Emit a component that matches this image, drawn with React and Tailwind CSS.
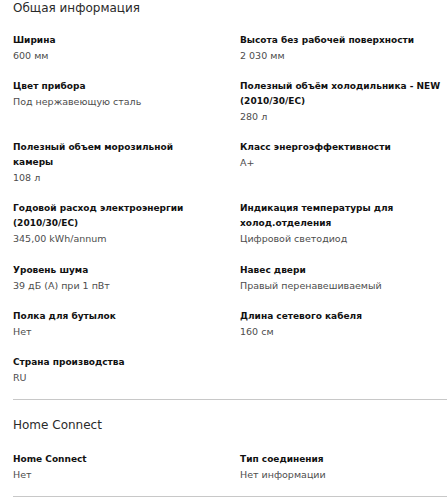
import React from 'react';

const general = [
  [
    { label: 'Ширина', value: '600 мм' },
    { label: 'Высота без рабочей поверхности', value: '2 030 мм' },
  ],
  [
    { label: 'Цвет прибора', value: 'Под нержавеющую сталь' },
    { label: 'Полезный объём холодильника - NEW (2010/30/EC)', value: '280 л' },
  ],
  [
    { label: 'Полезный объем морозильной камеры', value: '108 л' },
    { label: 'Класс энергоэффективности', value: 'A+' },
  ],
  [
    { label: 'Годовой расход электроэнергии (2010/30/EC)', value: '345,00 kWh/annum' },
    { label: 'Индикация температуры для холод.отделения', value: 'Цифровой светодиод' },
  ],
  [
    { label: 'Уровень шума', value: '39 дБ (A) при 1 пВт' },
    { label: 'Навес двери', value: 'Правый перенавешиваемый' },
  ],
  [
    { label: 'Полка для бутылок', value: 'Нет' },
    { label: 'Длина сетевого кабеля', value: '160 см' },
  ],
  [{ label: 'Страна производства', value: 'RU' }, null],
];

const connect = [
  [
    { label: 'Home Connect', value: 'Нет' },
    { label: 'Тип соединения', value: 'Нет информации' },
  ],
];

function Spec({ item, left }) {
  if (!item) return <div />;
  return (
    <div className={left ? 'pr-[24px]' : ''}>
      <div className="text-[9px] leading-[15px] font-bold text-[#111]">{item.label}</div>
      <div className="text-[9.5px] leading-[16px] text-[#4d4d4d]">{item.value}</div>
    </div>
  );
}

function Section({ title, rows, className, gridClass }) {
  return (
    <div className={'border-b border-[#c8c8c8] ' + className}>
      <h2 className="text-[12px] leading-[14px] text-[#2a2a2a]">{title}</h2>
      <div className={'grid grid-cols-[227px_1fr] gap-y-[15.25px] ' + gridClass}>
        {rows.map((row, i) => (
          <React.Fragment key={i}>
            <Spec item={row[0]} left />
            <Spec item={row[1]} />
          </React.Fragment>
        ))}
      </div>
    </div>
  );
}

export default function App() {
  return (
    <div className="w-[447px] bg-white pl-[13px]" style={{ fontFamily: '"DejaVu Sans", Verdana, sans-serif' }}>
      <Section title="Общая информация" rows={general} className="pt-[0.5px] pb-[13px]" gridClass="mt-[18px]" />
      <Section title="Home Connect" rows={connect} className="pt-[17.5px] pb-[13.5px]" gridClass="mt-[20px]" />
    </div>
  );
}
